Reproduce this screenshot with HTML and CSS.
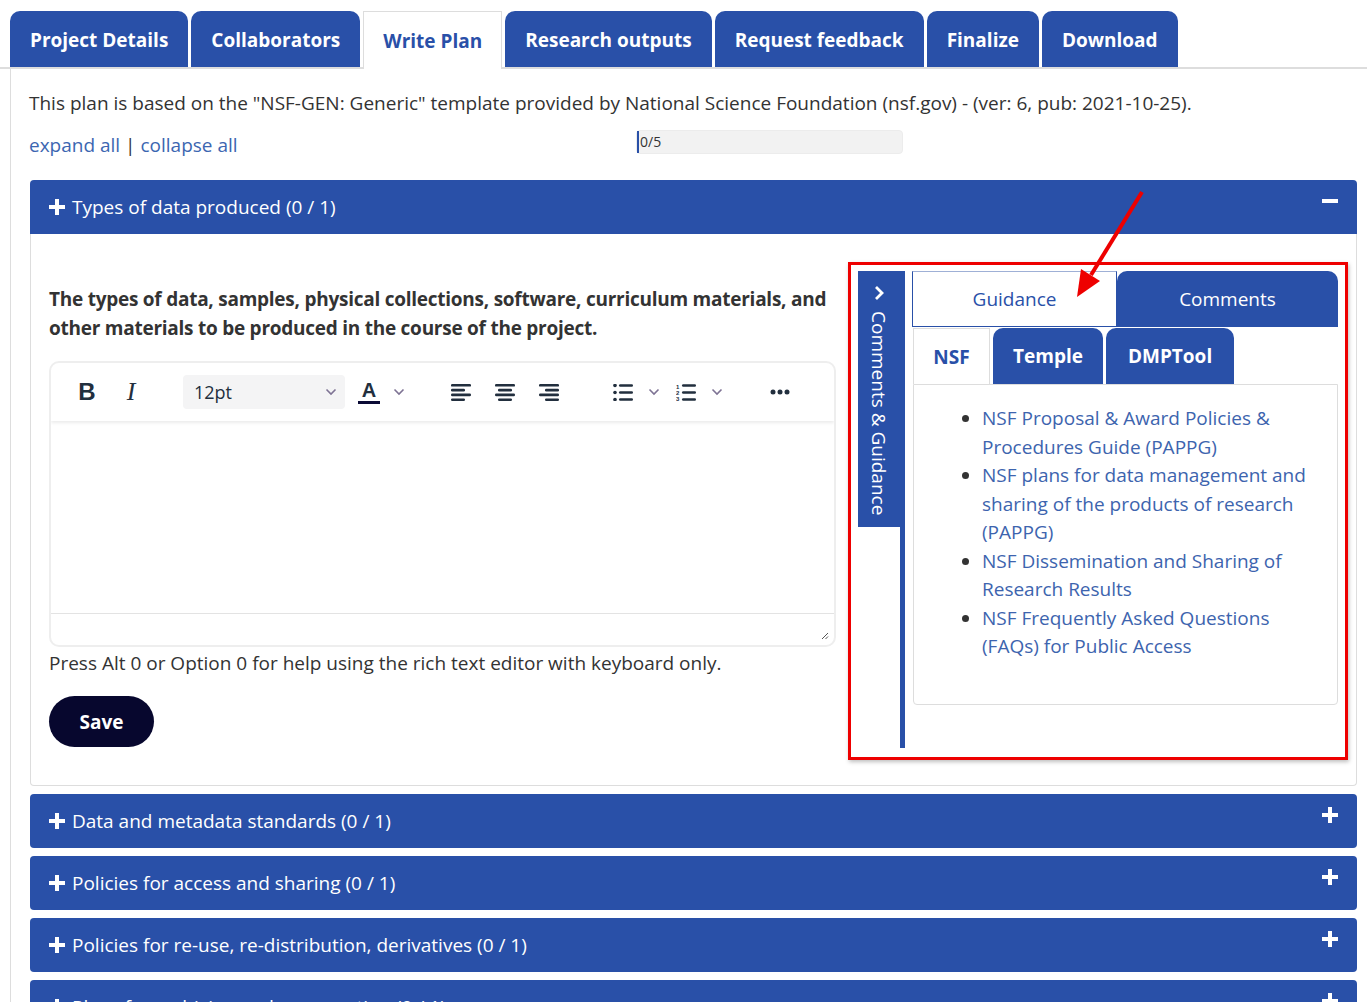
FILE: index.html
```html
<!DOCTYPE html>
<html lang="en">
<head>
<meta charset="utf-8">
<title>Write Plan</title>
<link rel="stylesheet" href="styles.css">
</head>
<body>
<nav class="tabs">
  <a class="tab">Project Details</a>
  <a class="tab">Collaborators</a>
  <a class="tab active">Write Plan</a>
  <a class="tab">Research outputs</a>
  <a class="tab">Request feedback</a>
  <a class="tab">Finalize</a>
  <a class="tab">Download</a>
</nav>
<main class="content">
  <p class="template-info">This plan is based on the "NSF-GEN: Generic" template provided by National Science Foundation (nsf.gov) - (ver: 6, pub: 2021-10-25).</p>
  <div class="controls">
    <div class="toggle-links"><a class="link">expand all</a> | <a class="link">collapse all</a></div>
    <div class="progress"><span class="progress-bar"></span><span class="progress-text">0/5</span></div>
  </div>

  <section class="panel">
    <div class="panel-head">
      <span class="head-title"><svg class="plus" viewBox="0 0 18 18"><path d="M9 1v16M1 9h16"/></svg>Types of data produced (0 / 1)</span>
      <svg class="head-icon" viewBox="0 0 18 18"><path d="M1 9h16"/></svg>
    </div>
    <div class="panel-body">
      <div class="question">
        <p class="question-text">The types of data, samples, physical collections, software, curriculum materials, and other materials to be produced in the course of the project.</p>
        <div class="editor">
          <div class="toolbar">
            <span class="tb-btn tb-b">B</span>
            <span class="tb-btn tb-i">I</span>
            <span class="tb-select"><span>12pt</span><svg class="chev" viewBox="0 0 12 8"><path d="M1.5 1.5l4.5 4.5 4.5-4.5"/></svg></span>
            <span class="tb-split tb-color">
              <span class="tb-part tb-a"><span class="a-letter">A</span><span class="a-line"></span></span>
              <span class="tb-chev"><svg class="chev" viewBox="0 0 12 8"><path d="M1.5 1.5l4.5 4.5 4.5-4.5"/></svg></span>
            </span>
            <span class="tb-group">
              <span class="tb-btn"><svg class="ico" viewBox="0 0 20 17"><rect x="0" y="0" width="20" height="2.6" rx="1.2"/><rect x="0" y="4.8" width="14" height="2.6" rx="1.2"/><rect x="0" y="9.6" width="20" height="2.6" rx="1.2"/><rect x="0" y="14.4" width="14" height="2.6" rx="1.2"/></svg></span>
              <span class="tb-btn"><svg class="ico" viewBox="0 0 20 17"><rect x="0" y="0" width="20" height="2.6" rx="1.2"/><rect x="3" y="4.8" width="14" height="2.6" rx="1.2"/><rect x="0" y="9.6" width="20" height="2.6" rx="1.2"/><rect x="3" y="14.4" width="14" height="2.6" rx="1.2"/></svg></span>
              <span class="tb-btn"><svg class="ico" viewBox="0 0 20 17"><rect x="0" y="0" width="20" height="2.6" rx="1.2"/><rect x="6" y="4.8" width="14" height="2.6" rx="1.2"/><rect x="0" y="9.6" width="20" height="2.6" rx="1.2"/><rect x="6" y="14.4" width="14" height="2.6" rx="1.2"/></svg></span>
            </span>
            <span class="tb-split tb-list">
              <span class="tb-part"><svg class="ico" viewBox="0 0 20 17"><circle cx="2" cy="1.5" r="1.8"/><circle cx="2" cy="8.5" r="1.8"/><circle cx="2" cy="15.5" r="1.8"/><rect x="6" y="0.2" width="14" height="2.6" rx="1.2"/><rect x="6" y="7.2" width="14" height="2.6" rx="1.2"/><rect x="6" y="14.2" width="14" height="2.6" rx="1.2"/></svg></span>
              <span class="tb-chev"><svg class="chev" viewBox="0 0 12 8"><path d="M1.5 1.5l4.5 4.5 4.5-4.5"/></svg></span>
            </span>
            <span class="tb-split tb-olist">
              <span class="tb-part"><svg class="ico ico-ol" viewBox="0 -1 20 19"><text x="0" y="4.6" class="num">1</text><text x="0" y="10.8" class="num">2</text><text x="0" y="17" class="num">3</text><rect x="6" y="0.2" width="14" height="2.6" rx="1.2"/><rect x="6" y="7.2" width="14" height="2.6" rx="1.2"/><rect x="6" y="14.2" width="14" height="2.6" rx="1.2"/></svg></span>
              <span class="tb-chev"><svg class="chev" viewBox="0 0 12 8"><path d="M1.5 1.5l4.5 4.5 4.5-4.5"/></svg></span>
            </span>
            <span class="tb-btn tb-more"><svg class="ico" viewBox="0 0 20 6"><circle cx="3" cy="3" r="2.5"/><circle cx="10" cy="3" r="2.5"/><circle cx="17" cy="3" r="2.5"/></svg></span>
          </div>
          <div class="edit-area"></div>
          <div class="statusbar"><svg class="resize" viewBox="0 0 10 10"><path d="M9 3L3 9M9 6.5L6.5 9"/></svg></div>
        </div>
        <p class="help">Press Alt 0 or Option 0 for help using the rich text editor with keyboard only.</p>
        <button class="save">Save</button>
      </div>

      <div class="guidance-frame">
        <div class="sidebar">
          <div class="side-tab">
            <svg class="side-chev" viewBox="0 0 12 16"><path d="M3 2l6 6-6 6"/></svg>
            <span class="side-label">Comments &amp; Guidance</span>
          </div>
        </div>
        <div class="guidance">
          <div class="g-tabs">
            <span class="g-tab g-active">Guidance</span>
            <span class="g-tab">Comments</span>
          </div>
          <div class="o-tabs">
            <span class="o-tab o-active">NSF</span>
            <span class="o-tab">Temple</span>
            <span class="o-tab o-wide">DMPTool</span>
          </div>
          <div class="g-content">
            <ul class="g-list">
              <li><a class="g-link">NSF Proposal &amp; Award Policies &amp; Procedures Guide (PAPPG)</a></li>
              <li><a class="g-link">NSF plans for data management and sharing of the products of research (PAPPG)</a></li>
              <li><a class="g-link">NSF Dissemination and Sharing of Research Results</a></li>
              <li><a class="g-link">NSF Frequently Asked Questions (FAQs) for Public Access</a></li>
            </ul>
          </div>
        </div>
      </div>
    </div>
  </section>

  <section class="panel closed">
    <div class="panel-head">
      <span class="head-title"><svg class="plus" viewBox="0 0 18 18"><path d="M9 1v16M1 9h16"/></svg>Data and metadata standards (0 / 1)</span>
      <svg class="head-icon" viewBox="0 0 18 18"><path d="M9 1v16M1 9h16"/></svg>
    </div>
  </section>
  <section class="panel closed">
    <div class="panel-head">
      <span class="head-title"><svg class="plus" viewBox="0 0 18 18"><path d="M9 1v16M1 9h16"/></svg>Policies for access and sharing (0 / 1)</span>
      <svg class="head-icon" viewBox="0 0 18 18"><path d="M9 1v16M1 9h16"/></svg>
    </div>
  </section>
  <section class="panel closed">
    <div class="panel-head">
      <span class="head-title"><svg class="plus" viewBox="0 0 18 18"><path d="M9 1v16M1 9h16"/></svg>Policies for re-use, re-distribution, derivatives (0 / 1)</span>
      <svg class="head-icon" viewBox="0 0 18 18"><path d="M9 1v16M1 9h16"/></svg>
    </div>
  </section>
  <section class="panel closed">
    <div class="panel-head">
      <span class="head-title"><svg class="plus" viewBox="0 0 18 18"><path d="M9 1v16M1 9h16"/></svg>Plans for archiving and preservation (0 / 1)</span>
      <svg class="head-icon" viewBox="0 0 18 18"><path d="M9 1v16M1 9h16"/></svg>
    </div>
  </section>
</main>

<svg class="annotation" viewBox="0 0 1367 1002">
  <line x1="1142" y1="192" x2="1091" y2="275" class="arrow-line"/>
  <polygon points="1077,297 1100,281 1081,269" class="arrow-head"/>
</svg>
</body>
</html>
```
FILE: styles.css
```css
* { box-sizing: border-box; }
html, body { margin: 0; padding: 0; }
body {
  font-family: "Open Sans", "Noto Sans", sans-serif;
  font-size: 19px;
  color: #333;
  background: #fff;
  width: 1367px;
  height: 1002px;
  overflow: hidden;
  position: relative;
}
p { margin: 0; }
a { text-decoration: none; }

/* top tabs */
.tabs {
  display: flex;
  align-items: flex-end;
  gap: 3px;
  padding: 11px 0 0 10px;
  height: 69px;
  border-bottom: 2px solid #ddd;
}
.tab {
  height: 56px;
  display: flex;
  align-items: center;
  justify-content: center;
  padding: 2px 20px 0;
  background: #2950a8;
  color: #fff;
  font-weight: 700;
  font-size: 19px;
  border-radius: 10px 10px 0 0;
}
.tab.active {
  background: #fff;
  color: #2950a8;
  border: 1px solid #ddd;
  border-bottom: none;
  height: 58px;
  margin-bottom: -2px;
  padding: 0 19px;
  border-radius: 0;
}

.content {
  margin-left: 10px;
  border-left: 1px solid #ddd;
  padding: 20px 10px 0 18px;
}
.template-info { line-height: 28px; }
.controls {
  display: flex;
  align-items: center;
  margin-top: 13px;
  height: 30px;
}
.toggle-links { width: 607px; }
.link { color: #3c66b1; }
.progress {
  width: 267px;
  height: 24px;
  background: #f2f2f2;
  border-radius: 4px;
  display: flex;
  align-items: center;
  font-size: 14px;
  color: #333;
  margin-top: -7px;
  border: 1px solid #ececec;
}
.progress-bar {
  width: 2px;
  height: 22px;
  background: #2950a8;
  margin-right: 1px;
}

/* panels */
.panel { margin-left: 1px; margin-top: 8px; }
.panel:first-of-type { margin-top: 20px; }
.panel-head {
  height: 54px;
  background: #2950a8;
  color: #fff;
  display: flex;
  align-items: center;
  justify-content: space-between;
  padding: 0 18px;
  border-radius: 4px 4px 0 0;
}
.closed .panel-head { border-radius: 4px; }
.head-title { display: flex; align-items: center; gap: 6px; }
.plus, .head-icon {
  width: 18px;
  height: 18px;
  stroke: #fff;
  stroke-width: 4;
  fill: none;
}
.head-icon { align-self: flex-start; margin-top: 12px; }
.panel-body {
  border: 1px solid #ddd;
  border-top: none;
  border-radius: 0 0 4px 4px;
  display: flex;
  align-items: flex-start;
  gap: 12px;
  padding: 28px 8px 25px 18px;
}
.question { width: 788px; padding-top: 23px; }
.question-text { font-weight: 700; line-height: 29px; letter-spacing: -0.25px; }

/* editor */
.editor {
  margin-top: 18px;
  border: 2px solid #eee;
  border-radius: 10px;
  height: 286px;
  display: flex;
  flex-direction: column;
  overflow: hidden;
}
.toolbar {
  height: 58px;
  display: flex;
  align-items: center;
  padding-left: 19px;
  box-shadow: 0 2px 3px rgba(0,0,0,0.08);
  position: relative;
}
.tb-btn, .tb-part, .tb-chev {
  height: 34px;
  display: flex;
  align-items: center;
  justify-content: center;
  color: #222f3e;
}
.tb-btn { width: 34px; }
.tb-b { font-family: "Liberation Sans", sans-serif; font-weight: 700; font-size: 24px; }
.tb-i { font-family: "Liberation Serif", serif; font-style: italic; font-size: 26px; margin-left: 10px; }
.tb-select {
  margin-left: 35px;
  width: 162px;
  height: 34px;
  background: #f4f4f5;
  border-radius: 4px;
  display: flex;
  align-items: center;
  justify-content: space-between;
  padding: 0 8px 0 11px;
  font-size: 18px;
  color: #222f3e;
}
.chev { width: 12px; height: 8px; stroke: #7e7394; stroke-width: 1.6; fill: none; }
.tb-split { display: flex; }
.tb-color { margin-left: 9px; }
.tb-a { width: 30px; flex-direction: column; }
.a-letter { font-family: "Liberation Sans", sans-serif; font-weight: 700; font-size: 20px; line-height: 20px; }
.a-line { width: 22px; height: 3px; background: #0a0a35; margin-top: 1px; }
.tb-color .tb-chev { width: 30px; }
.tb-group { display: flex; gap: 10px; margin-left: 30px; }
.ico { width: 20px; height: 17px; fill: #222f3e; }
.ico-ol { height: 19px; }
.tb-more .ico { height: 6px; }
.tb-list { margin-left: 40px; }
.tb-olist { margin-left: 1px; }
.tb-list .tb-part, .tb-olist .tb-part { width: 34px; }
.tb-list .tb-chev, .tb-olist .tb-chev { width: 28px; }
.num { font-family: "Liberation Sans", sans-serif; font-size: 6px; font-weight: 700; fill: #222f3e; }
.tb-more { margin-left: 32px; }
.edit-area { flex: 1; }
.statusbar {
  height: 32px;
  border-top: 1px solid #e3e3e3;
  display: flex;
  justify-content: flex-end;
  align-items: flex-end;
  padding: 0 5px 5px 0;
}
.resize { width: 10px; height: 10px; stroke: #555; stroke-width: 1; fill: none; }
.help { margin-top: 2px; line-height: 28px; }
.save {
  margin-top: 19px;
  width: 105px;
  height: 51px;
  border: none;
  border-radius: 26px;
  background: #07072e;
  color: #fff;
  font-family: inherit;
  font-weight: 700;
  font-size: 19px;
}

/* guidance frame */
.guidance-frame {
  width: 500px;
  height: 498px;
  border: 3px solid #ee0000;
  padding: 6px 7px 9px 7px;
  display: flex;
  gap: 7px;
  box-shadow: 1px 2px 4px rgba(0,0,0,0.25);
}
.sidebar {
  width: 47px;
  border-right: 5px solid #2950a8;
  flex-shrink: 0;
}
.side-tab {
  width: 42px;
  height: 256px;
  background: #2950a8;
  color: #fff;
  display: flex;
  flex-direction: column;
  align-items: center;
  padding-top: 14px;
}
.side-chev { width: 12px; height: 16px; stroke: #fff; stroke-width: 2.8; fill: none; }
.side-label { writing-mode: vertical-rl; margin-top: 10px; line-height: 22px; }
.guidance { width: 427px; }
.g-tabs { display: flex; height: 56px; }
.g-tab {
  flex: 1;
  display: flex;
  align-items: center;
  justify-content: center;
  background: #2950a8;
  color: #fff;
  border-radius: 10px 10px 0 0;
}
.g-tab.g-active {
  width: 205px;
  flex: none;
  background: #fff;
  color: #2950a8;
  border: 1px solid #2950a8;
  border-top-color: #9fb0d6;
  border-radius: 0;
}
.o-tabs { display: flex; gap: 3px; height: 57px; padding-top: 1px; padding-left: 1px; }
.o-tab {
  display: flex;
  align-items: center;
  justify-content: center;
  padding: 0 20px;
  background: #2950a8;
  color: #fff;
  font-weight: 700;
  border-radius: 10px 10px 0 0;
}
.o-tab.o-wide { padding: 0 22px; }
.o-tab.o-active {
  background: #fff;
  color: #2950a8;
  border: 1px solid #ddd;
  border-bottom: none;
  border-radius: 0;
  width: 77px;
  padding: 0;
}
.g-content {
  margin-left: 1px;
  height: 321px;
  border: 1px solid #ddd;
  border-radius: 0 0 4px 4px;
  padding: 19px 28px 0 28px;
}
.g-list { margin: 0; padding-left: 40px; line-height: 28.5px; }
.g-link { color: #3d64ae; }

.annotation {
  position: absolute;
  left: 0;
  top: 0;
  width: 1367px;
  height: 1002px;
  pointer-events: none;
}
.arrow-line { stroke: #ee0000; stroke-width: 4; }
.arrow-head { fill: #ee0000; }
```
